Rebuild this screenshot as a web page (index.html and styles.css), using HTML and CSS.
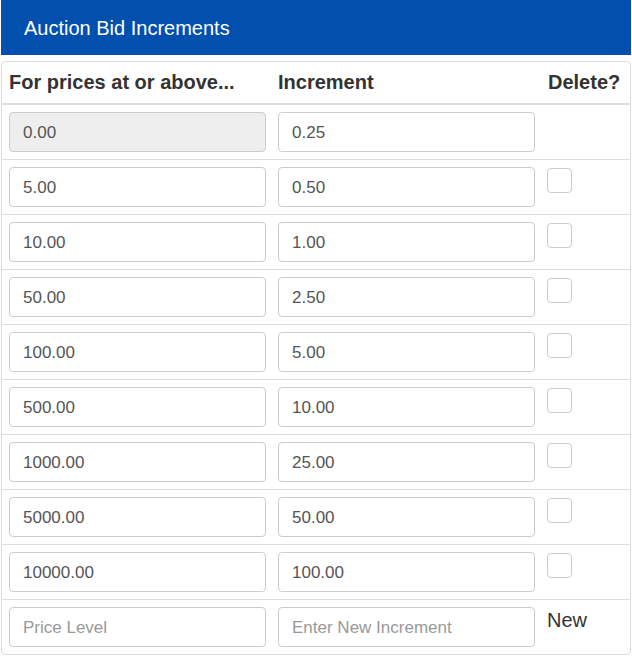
FILE: index.html
```html
<!DOCTYPE html>
<html>
<head>
<meta charset="utf-8">
<link rel="stylesheet" href="styles.css">
</head>
<body>
<div class="titlebar">Auction Bid Increments</div>
<div class="panel">
  <div class="row head">
    <div class="cell">For prices at or above...</div>
    <div class="cell">Increment</div>
    <div class="cell">Delete?</div>
  </div>
  <div class="row first">
    <input class="field disabled" value="0.00" disabled>
    <input class="field" value="0.25">
    <div></div>
  </div>
  <div class="row"><input class="field" value="5.00"><input class="field" value="0.50"><span class="check"></span></div>
  <div class="row"><input class="field" value="10.00"><input class="field" value="1.00"><span class="check"></span></div>
  <div class="row"><input class="field" value="50.00"><input class="field" value="2.50"><span class="check"></span></div>
  <div class="row"><input class="field" value="100.00"><input class="field" value="5.00"><span class="check"></span></div>
  <div class="row"><input class="field" value="500.00"><input class="field" value="10.00"><span class="check"></span></div>
  <div class="row"><input class="field" value="1000.00"><input class="field" value="25.00"><span class="check"></span></div>
  <div class="row"><input class="field" value="5000.00"><input class="field" value="50.00"><span class="check"></span></div>
  <div class="row"><input class="field" value="10000.00"><input class="field" value="100.00"><span class="check"></span></div>
  <div class="row"><input class="field" placeholder="Price Level"><input class="field" placeholder="Enter New Increment"><span class="newlabel">New</span></div>
</div>
</body>
</html>
```
FILE: styles.css
```css
html, body {
  margin: 0;
  padding: 0;
  background: #fff;
  font-family: "Liberation Sans", Arial, sans-serif;
  color: #333;
}
body {
  padding: 0 1px;
}
.titlebar {
  background: #024fae;
  color: #fff;
  font-size: 20px;
  height: 55px;
  box-sizing: border-box;
  padding-top: 1px;
  line-height: 54px;
  padding-left: 23px;
}
.panel {
  margin-top: 6px;
  border: 1px solid #ddd;
  border-radius: 4px;
  width: 628px;
}
.row {
  display: grid;
  grid-template-columns: 257px 257px 1fr;
  column-gap: 12px;
  padding: 7px 7px;
  border-top: 1px solid #ddd;
  align-items: start;
}
.row.head {
  border-top: none;
  border-bottom: 2px solid #ddd;
  padding: 8px 7px 8px 7px;
  font-weight: bold;
  font-size: 20px;
  line-height: 25px;
  color: #333;
}
.row.head .cell:last-child {
  padding-left: 1px;
}
.row.first {
  border-top: none;
}
.field {
  box-sizing: border-box;
  height: 40px;
  width: 100%;
  border: 1px solid #ccc;
  border-radius: 4px;
  padding: 2px 13px 0;
  font-family: "Liberation Sans", Arial, sans-serif;
  font-size: 17px;
  color: #555;
  background: #fff;
  margin: 0;
}
.field::placeholder {
  color: #999;
}
.field.disabled {
  background: #eee;
}
.check {
  display: block;
  box-sizing: border-box;
  width: 25px;
  height: 25px;
  border: 1px solid #ccc;
  border-radius: 4px;
  background: #fff;
  margin-top: 1px;
}
.newlabel {
  font-size: 20px;
  line-height: 27px;
  color: #333;
}
```
